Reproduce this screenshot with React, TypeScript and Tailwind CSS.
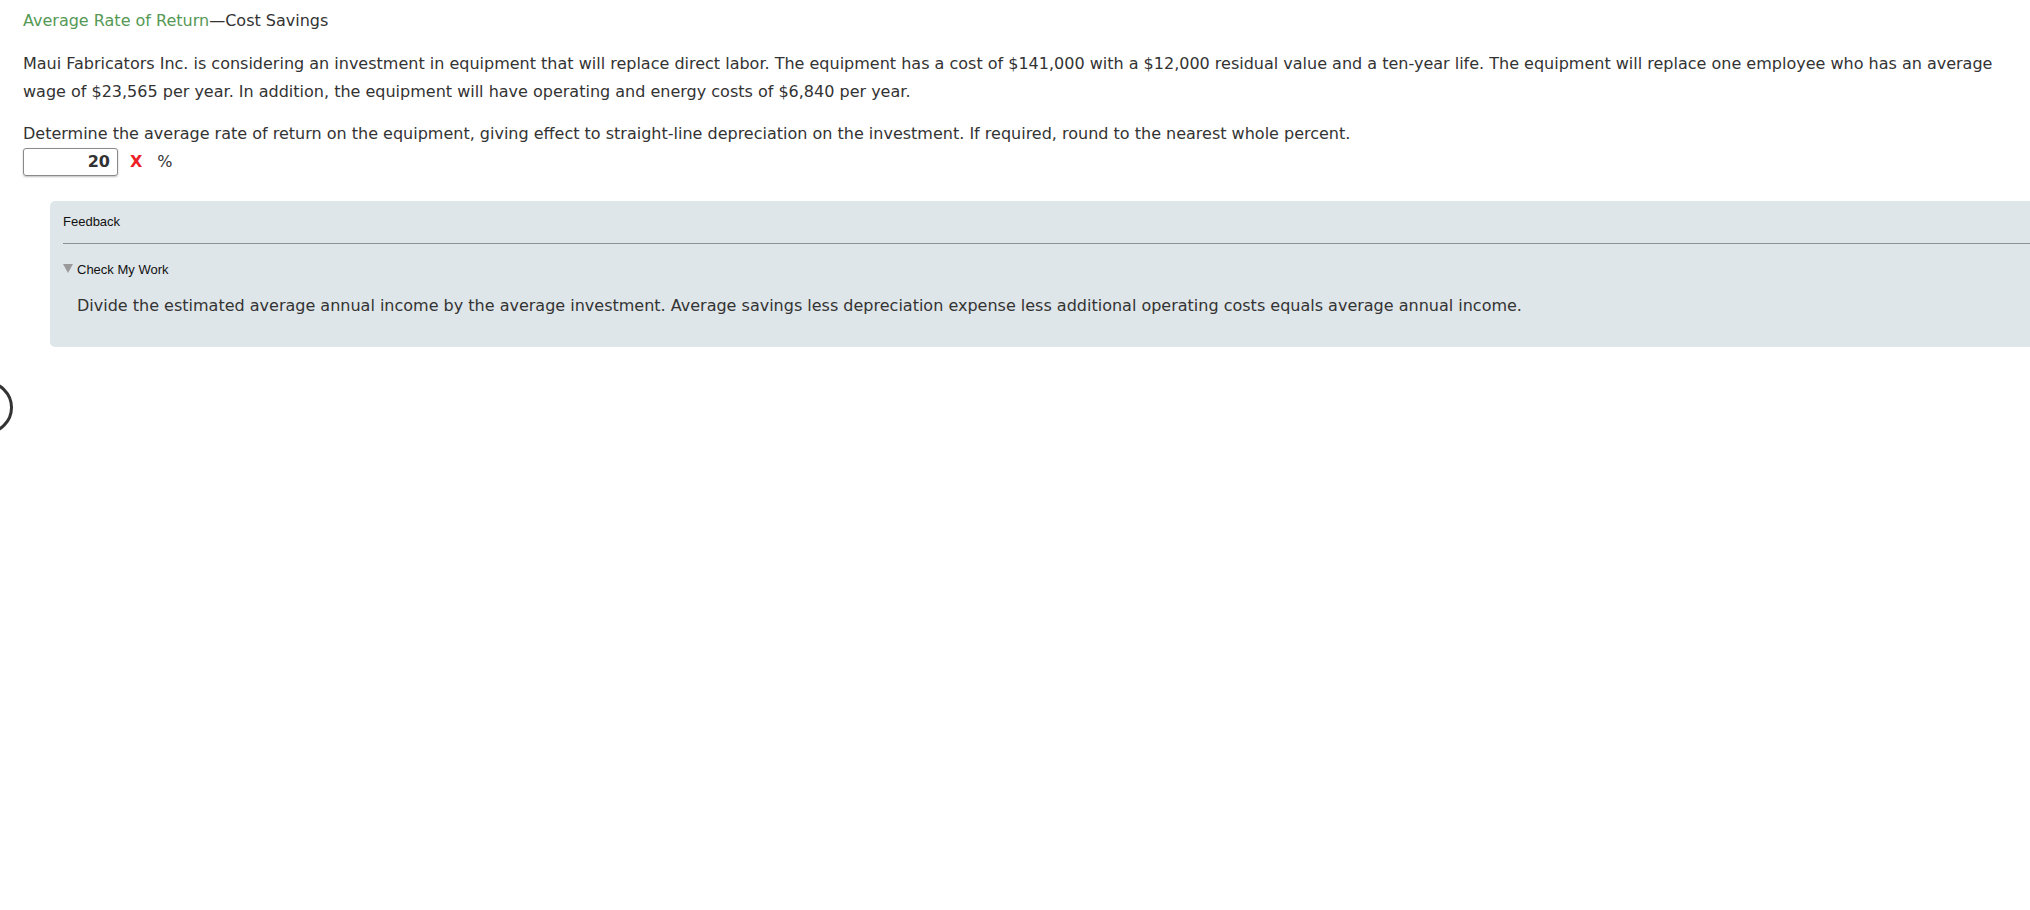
import React from "react";

const App = () => {
  return (
    <div className="relative w-full h-[910px] overflow-hidden bg-white text-[#333] text-[16px] leading-[28px] font-['DejaVu_Sans',Verdana,sans-serif]">
      <div className="pl-[23px] pt-[7px]">
        <h1 className="font-normal">
          <span className="text-[#559955]">Average Rate of Return</span>
          <span>—Cost Savings</span>
        </h1>

        <p className="mt-[15px] pr-[20px]">
          Maui Fabricators Inc. is considering an investment in equipment that will replace direct labor. The
          equipment has a cost of $141,000 with a $12,000 residual value and a ten-year life. The equipment will
          replace one employee who has an average wage of $23,565 per year. In addition, the equipment will have
          operating and energy costs of $6,840 per year.
        </p>

        <p className="mt-[14px]">
          Determine the average rate of return on the equipment, giving effect to straight-line depreciation on the
          investment. If required, round to the nearest whole percent.
        </p>

        <div className="flex items-center h-[28px]">
          <div className="w-[95px] h-[28px] border border-[#8a8a8a] rounded-[3px] shadow-[0_1px_2px_rgba(0,0,0,0.25)] flex items-center justify-end pr-[7px] font-bold text-[#333]">
            20
          </div>
          <span className="ml-[12px] font-bold text-[#ec1f27]">X</span>
          <span className="ml-[15px]">%</span>
        </div>

        <div className="ml-[27px] mt-[25px] w-[2100px] rounded-[5px] bg-[#dfe6e9] px-[13px] pb-[27px]">
          <div className="pt-[13px] pb-[13px] border-b border-[#8a9294] text-[13px] leading-[16px] text-[#111] font-['Liberation_Sans',Arial,sans-serif]">
            Feedback
          </div>
          <div className="mt-[18px] flex items-center text-[13px] leading-[16px] text-[#111] font-['Liberation_Sans',Arial,sans-serif]">
            <svg width="10" height="9" viewBox="0 0 10 9" className="mr-[4px] mb-[3px]">
              <polygon points="0,0 10,0 5,9" fill="#9a9a9a" />
            </svg>
            <span>Check My Work</span>
          </div>
          <p className="mt-[14px] pl-[14px]">
            Divide the estimated average annual income by the average investment. Average savings less depreciation
            expense less additional operating costs equals average annual income.
          </p>
        </div>
      </div>

      <div className="absolute left-[-40px] top-[381px] w-[53px] h-[53px] rounded-full border-[3px] border-[#333]" />
    </div>
  );
};

export default App;
